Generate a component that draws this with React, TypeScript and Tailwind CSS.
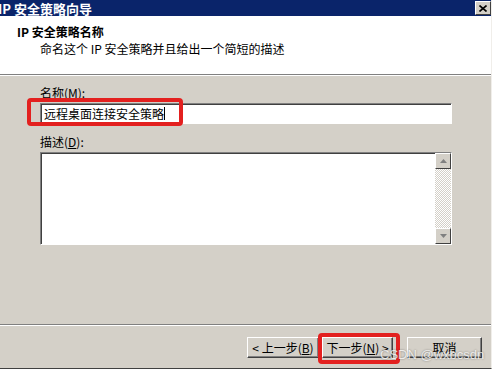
import React from "react";

const font = { fontFamily: '"SimSun", "Noto Sans CJK SC", "Liberation Sans", sans-serif' };

const Btn = ({ children, className = "" }: { children: React.ReactNode; className?: string }) => (
  <div
    className={`h-[21px] flex items-center justify-center text-[12px] text-black bg-[#d4d0c8] border border-t-white border-l-white border-b-[#404040] border-r-[#404040] shadow-[inset_-1px_-1px_0_#808080] ${className}`}
  >
    {children}
  </div>
);

const Arrow = ({ up }: { up?: boolean }) => (
  <div className="w-[16px] h-[16px] bg-[#d4d0c8] border border-t-white border-l-white border-b-[#404040] border-r-[#404040] flex items-center justify-center">
    <svg width="7" height="4" viewBox="0 0 7 4">
      {up ? <path d="M3.5 0 L7 4 L0 4 Z" fill="#808080" /> : <path d="M0 0 L7 0 L3.5 4 Z" fill="#808080" />}
    </svg>
  </div>
);

export default function App() {
  return (
    <div className="relative w-[495px] h-[375px] bg-white overflow-hidden" style={font}>
      <div className="w-[492px] h-[369px] bg-[#d4d0c8] border-r border-r-[#f0eeea] border-b border-b-[#404040] flex flex-col">
        {/* title bar */}
        <div className="h-[16px] bg-[#0a246a] flex items-center justify-between pr-0">
          <span className="-ml-[2px] text-white text-[13px] font-bold leading-none whitespace-pre">IP 安全策略向导</span>
          <div className="w-[16px] h-[14px] bg-[#d4d0c8] border border-t-white border-l-white border-b-[#404040] border-r-[#404040] flex items-center justify-center">
            <svg width="8" height="7" viewBox="0 0 8 7">
              <path d="M0.5 0.5 L7.5 6.5 M7.5 0.5 L0.5 6.5" stroke="#000" strokeWidth="1.6" />
            </svg>
          </div>
        </div>

        {/* header */}
        <div className="h-[59px] bg-white border-b border-b-[#808080] flex flex-col pt-[9px]">
          <div className="pl-[17px] text-[12px] font-bold leading-[14px] text-black whitespace-pre">IP 安全策略名称</div>
          <div className="pl-[40px] mt-[3px] text-[12px] leading-[14px] text-black whitespace-pre">命名这个 IP 安全策略并且给出一个简短的描述</div>
        </div>
        <div className="h-px bg-white" />

        {/* body */}
        <div className="flex-1 flex flex-col pl-[40px] pr-[40px] pt-[10px]">
          <div className="text-[12px] leading-[14px] text-black">名称(<u>M</u>):</div>
          <div className="mt-[3px] w-[412px] h-[21px] bg-white border border-t-[#808080] border-l-[#808080] border-b-white border-r-white shadow-[inset_1px_1px_0_#404040] flex items-center pl-[3px] text-[12px] text-black">
            远程桌面连接安全策略<span className="w-px h-[13px] bg-black" />
          </div>
          <div className="mt-[11px] text-[12px] leading-[14px] text-black">描述(<u>D</u>):</div>
          <div className="mt-[3px] w-[412px] h-[93px] bg-white border border-t-[#808080] border-l-[#808080] border-b-white border-r-white shadow-[inset_1px_1px_0_#404040] flex justify-end">
            <div className="w-[16px] h-full flex flex-col bg-[repeating-conic-gradient(#d4d0c8_0%_25%,#ffffff_0%_50%)] bg-[length:2px_2px]">
              <Arrow up />
              <div className="flex-1" />
              <Arrow />
            </div>
          </div>
        </div>

        {/* bottom */}
        <div className="h-px bg-[#808080]" />
        <div className="h-px bg-white" />
        <div className="h-[42px] flex items-start pt-[11px] pl-[247px]">
          <Btn className="w-[72px]">&lt; 上一步(<u>B</u>)</Btn>
          <Btn className="w-[71px] ml-[3px]">下一步(<u>N</u>) &gt;</Btn>
          <Btn className="w-[75px] ml-[14px]">取消</Btn>
        </div>
      </div>

      {/* highlights */}
      <div className="absolute left-[27px] top-[98px] w-[156px] h-[28px] border-[4px] border-[#e3201f] rounded-[4px]" />
      <div className="absolute left-[318px] top-[333px] w-[82px] h-[31px] border-[4px] border-[#e3201f] rounded-[4px]" />

      {/* watermark */}
      <div
        className="absolute left-[380px] top-[348px] text-[13px] leading-none text-white/80 [text-shadow:0_0_2px_rgba(0,0,0,0.45)] whitespace-pre"
        style={{ fontFamily: '"Liberation Sans", sans-serif' }}
      >
        CSDN @wxbcsdn
      </div>
    </div>
  );
}
